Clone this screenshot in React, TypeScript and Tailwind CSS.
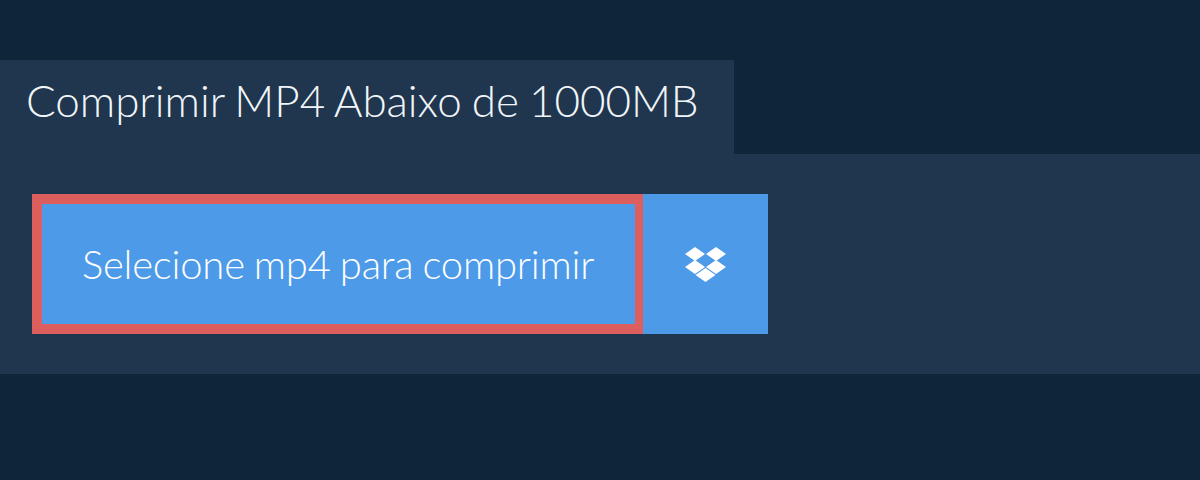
export default function App() {
  return (
    <div className="h-[480px] bg-[#0e253a] pt-[60px] font-['Lato',sans-serif]">
      <div className="flex h-[94px] w-[734px] items-start bg-[#1f364e] pl-[26px] pt-[15px]">
        <h1 className="whitespace-nowrap text-[44px] font-light leading-[50px] tracking-[-0.05px] text-[#f1f5f9] [word-spacing:-1.8px]">Comprimir MP4 Abaixo de 1000MB</h1>
      </div>
      <div className="h-[220px] bg-[#1f364e] px-[32px] py-[40px]">
        <div className="flex h-[140px] w-[736px]">
          <button className="flex w-[611px] items-center justify-center border-y-[10px] border-l-[10px] border-r-[8px] border-[#dc5f5d] bg-[#4d9ae8] pr-[1px] text-[40px] font-light tracking-[-0.2px] text-white [word-spacing:-1.6px]">
            Selecione mp4 para comprimir
          </button>
          <button className="flex w-[125px] items-center justify-center bg-[#4d9ae8] text-white">
            <svg width="41" height="35" viewBox="0 0 41 35" fill="currentColor">
              <path d="M10 0 20 7 10 14 0 7zM31 0 41 7 31 14 21 7zM10 13 20 20 10 27 0 20zM31 13 41 20 31 27 21 20zM20.5 21 30.5 28 20.5 35 10.5 28z" />
            </svg>
          </button>
        </div>
      </div>
    </div>
  )
}
